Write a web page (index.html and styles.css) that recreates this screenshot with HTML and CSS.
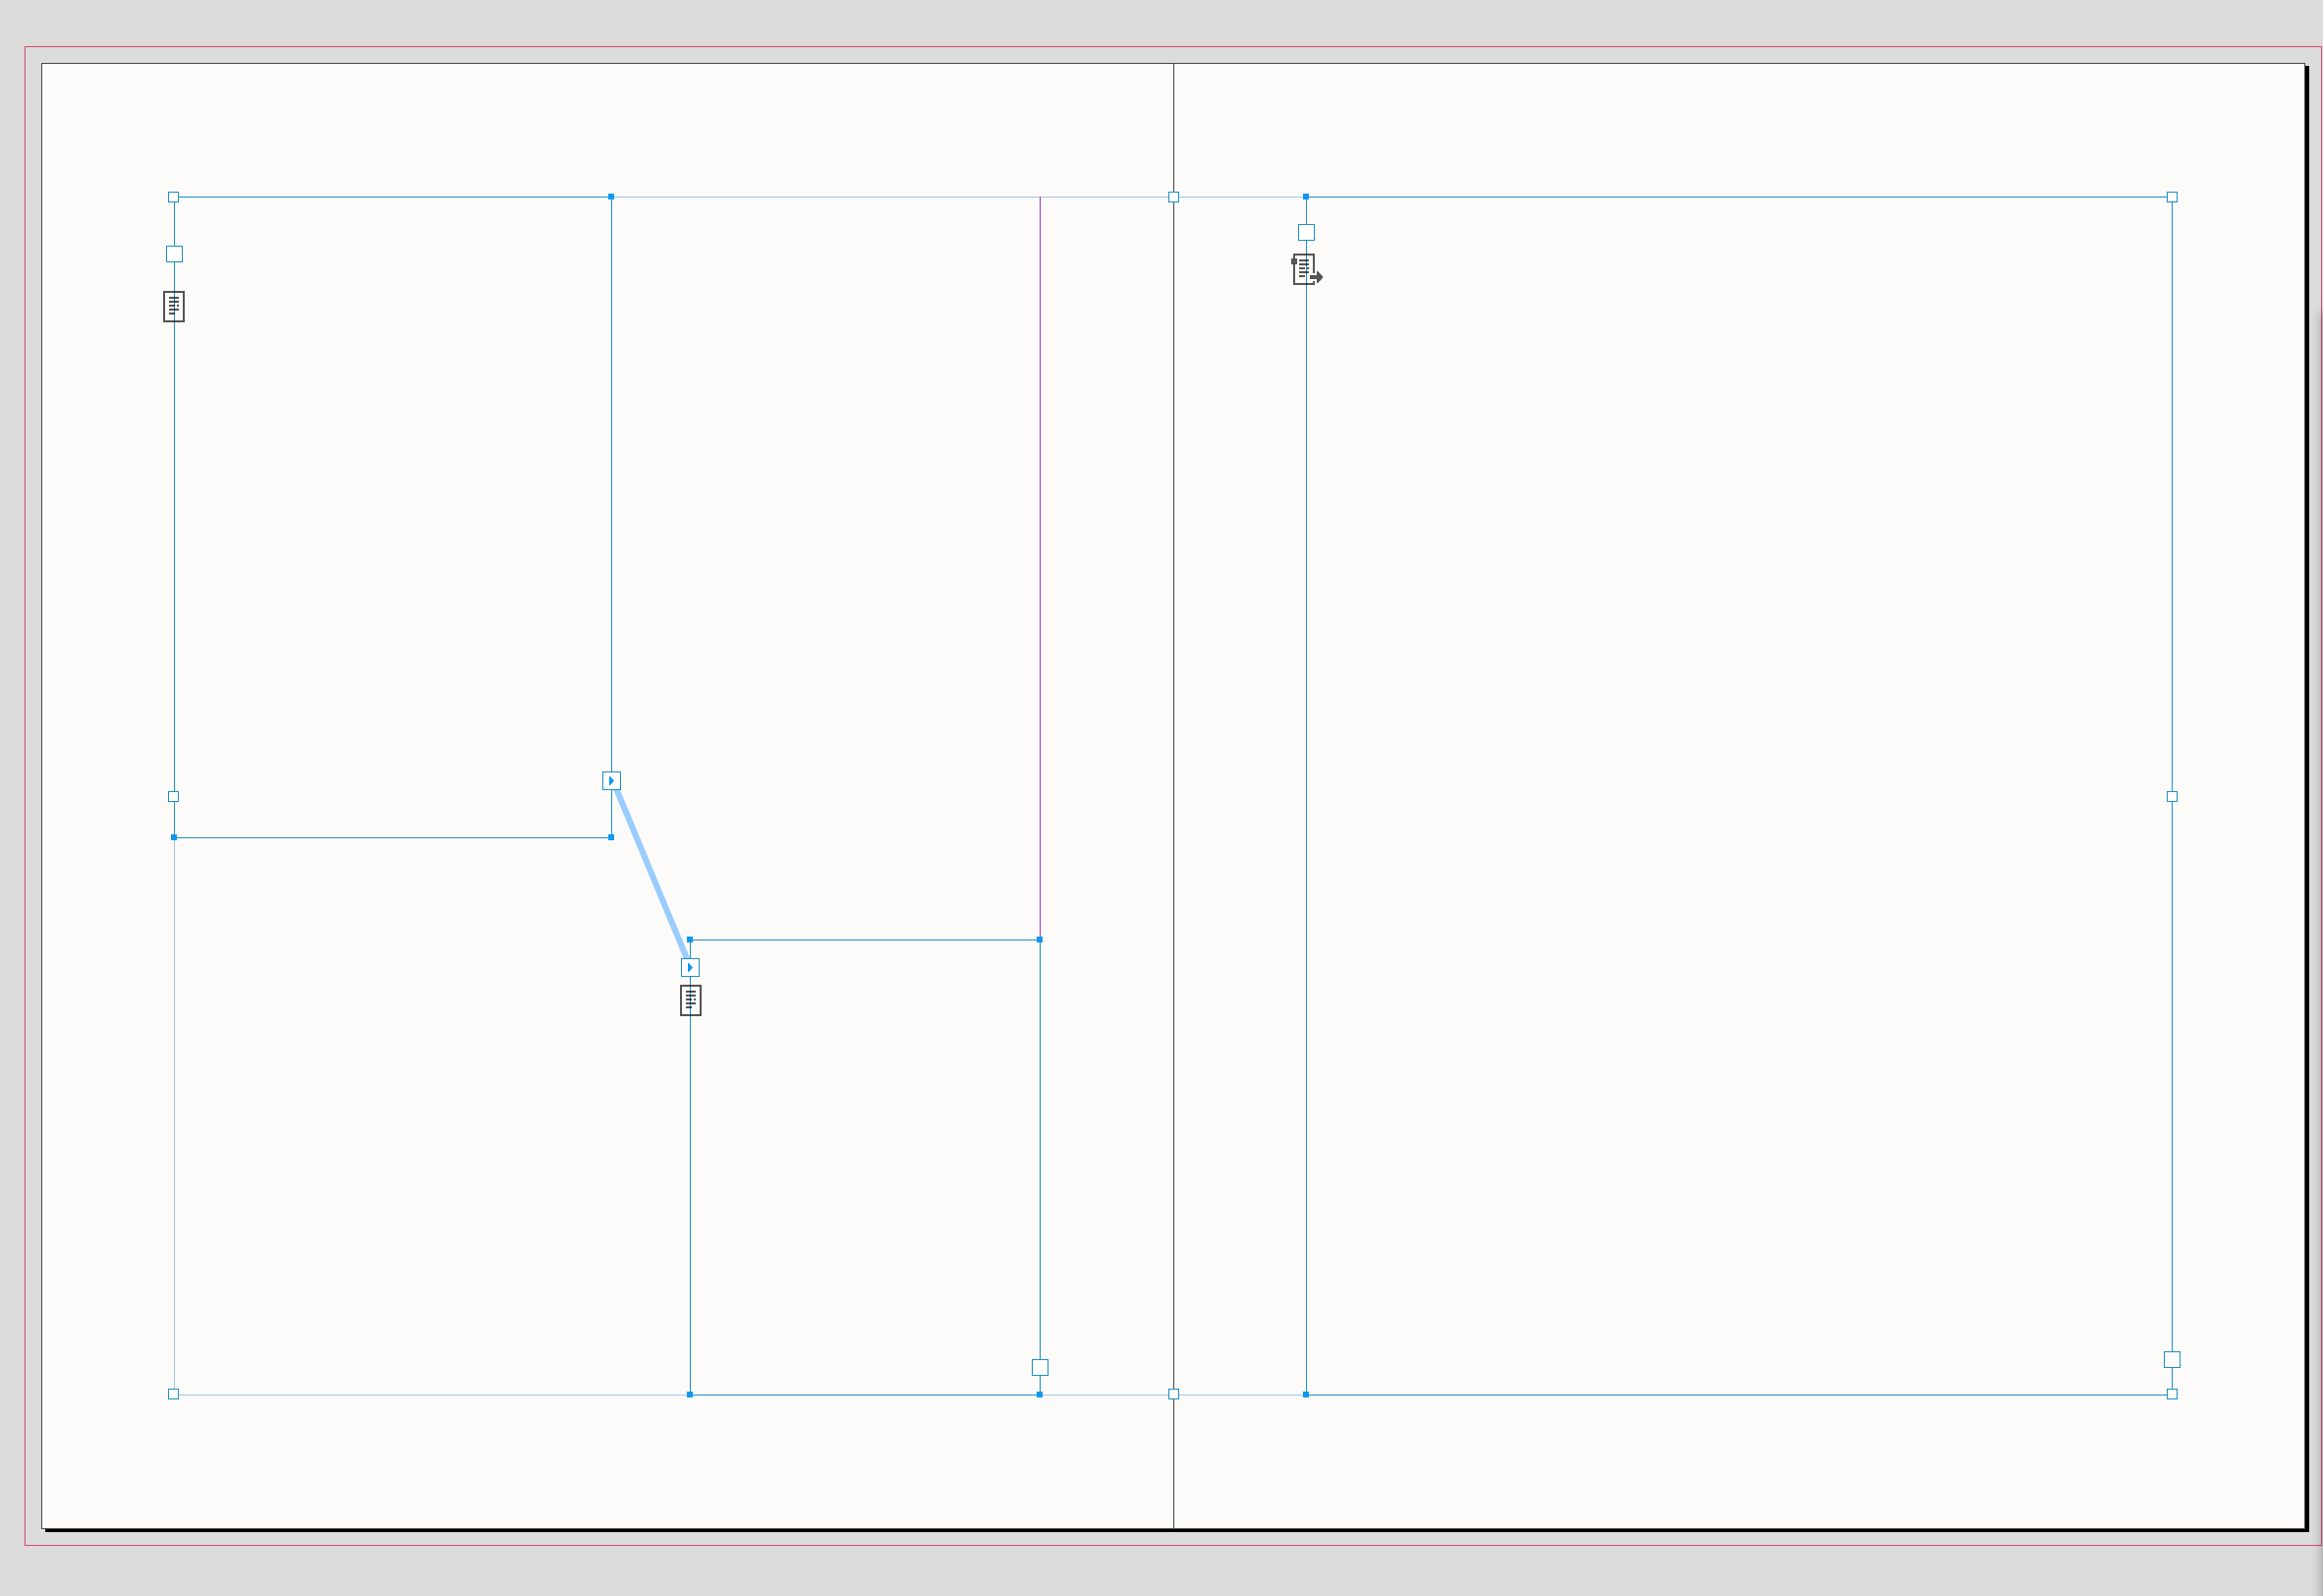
FILE: index.html
```html
<!DOCTYPE html>
<html lang="en">
<head>
<meta charset="utf-8">
<meta name="viewport" content="width=device-width, initial-scale=1">
<title>Layout spread</title>
<link rel="stylesheet" href="styles.css">
</head>
<body>
<svg class="defs" aria-hidden="true">
  <symbol id="story" viewBox="0 0 22 32">
    <path d="M0 0H22V32H0ZM2 2V30H20V2Z" fill-rule="evenodd"/>
    <path d="M6 6h10v2H6zM6 10h10v2H6zM6 14h6v2H6zM14 14h2v2h-2zM6 18h10v2H6zM6 22h6v2H6z"/>
  </symbol>
  <symbol id="story-flow" viewBox="-2 0 34 32">
    <path d="M0 0H22V20H20V2H2V30H20V28H22V32H0Z"/>
    <path d="M-2 5h6v6h-6zM6 6h10v2H6zM6 10h10v2H6zM6 14h6v2H6zM14 14h2v2h-2zM6 18h10v2H6zM6 22h6v2H6z"/>
    <path d="M17 22h7v-4h1l5 5v2l-5 5h-1v-4h-7z"/>
  </symbol>
</svg>
<main class="pasteboard">
  <div class="bleed">
    <div class="spread">
      <section class="page page-left">
        <div class="text-area column-edge">
          <svg class="thread" width="120" height="220" viewBox="0 0 120 220" aria-hidden="true">
            <path d="M22 14L101 204"/>
          </svg>
          <div class="frame frame-first">
            <i class="knob top right"></i>
            <i class="knob bottom left"></i>
            <i class="knob bottom right"></i>
            <button class="port in" aria-label="In port"></button>
            <svg class="story" width="22" height="32"><use href="#story"/></svg>
            <button class="port linked out" aria-label="Threaded out port"></button>
          </div>
          <div class="frame frame-second">
            <i class="knob top left"></i>
            <i class="knob top right"></i>
            <i class="knob bottom left"></i>
            <i class="knob bottom right"></i>
            <button class="port linked in" aria-label="Threaded in port"></button>
            <svg class="story" width="22" height="32"><use href="#story"/></svg>
            <button class="port out" aria-label="Out port"></button>
          </div>
        </div>
      </section>
      <section class="page page-right">
        <div class="text-area frame frame-primary">
          <i class="knob top left"></i>
          <i class="knob bottom left"></i>
          <button class="port in" aria-label="In port"></button>
          <svg class="story" width="34" height="32"><use href="#story-flow"/></svg>
          <button class="port out" aria-label="Out port"></button>
        </div>
      </section>
      <div class="selection outline"></div>
      <div class="selection handles">
        <i class="handle top left"></i>
        <i class="handle top center"></i>
        <i class="handle top right"></i>
        <i class="handle middle left"></i>
        <i class="handle middle right"></i>
        <i class="handle bottom left"></i>
        <i class="handle bottom center"></i>
        <i class="handle bottom right"></i>
      </div>
    </div>
  </div>
  <div class="panel-shade"></div>
</main>
</body>
</html>
```
FILE: styles.css
```css
:root {
  --board: #dcdcdc;
  --paper: #fcfbf9;
  --ink: #464646;
  --bleed: #cf5069;
  --bleed-halo: #e9d0d5;
  --frame: #1c8fc6;
  --knob: #0e98f0;
  --guide: #a4c6e8;
  --column: #a030cc;
  --thread: #99ccff;
}

* { box-sizing: border-box; }

body {
  margin: 0;
  background: var(--board);
  font-family: "Open Sans", sans-serif;
}

.defs { position: absolute; width: 0; height: 0; }

.pasteboard {
  position: relative;
  display: flex;
  min-height: 100vh;
  padding: 47px 1px 51px 25px;
  overflow: hidden;
}

.bleed {
  flex: 1;
  display: flex;
  padding: 16px;
  border: 1px solid var(--bleed);
  box-shadow: 0 0 0 1px var(--bleed-halo);
}

.spread {
  position: relative;
  isolation: isolate;
  flex: 1;
  display: flex;
  background: var(--paper);
  border: 1px solid var(--ink);
  box-shadow: 4px 3px 0 #000;
}

.page { display: flex; padding: 135px 134px; }
.page-left { flex: 1 1 2px; padding-right: 135px; border-right: 1px solid var(--ink); }
.page-right { flex: 1 1 0; }

.text-area { position: relative; flex: 1; }
.column-edge { border-right: 1px solid var(--column); }

/* Text frames on the canvas */
.frame { border: 1px solid var(--frame); }
.frame-first { position: absolute; left: 0; top: 0; width: 446px; height: 653px; }
.frame-second { position: absolute; right: -1px; bottom: 0; width: 357px; height: 464px; }

.knob { position: absolute; width: 6px; height: 6px; background: var(--knob); }
.knob.top { top: -4px; }
.knob.bottom { bottom: -3px; }
.knob.left { left: -4px; }
.knob.right { right: -3px; }

.port {
  position: absolute;
  width: 17px;
  height: 17px;
  padding: 0;
  border: 1px solid var(--frame);
  border-radius: 0;
  background: #fff;
}
.port.in { left: -9px; }
.port.out { right: -9px; }
.port.linked { width: 19px; height: 19px; }
.port.linked.in { left: -10px; }
.port.linked.out { right: -10px; }
.port.linked::before {
  content: "";
  position: absolute;
  left: 6px;
  top: 4px;
  width: 5px;
  height: 9px;
  background: var(--knob);
  clip-path: polygon(0 0, 20% 0, 100% 50%, 20% 100%, 0 100%);
}

.frame-first .in { top: 49px; }
.frame-first .out { bottom: 48px; }
.frame-second .in { top: 18px; }
.frame-second .out { bottom: 19px; }
.frame-primary .in { top: 27px; }
.frame-primary .out { bottom: 27px; }

.story { position: absolute; left: -12px; fill: #575556; mix-blend-mode: multiply; }
.frame-first .story { top: 95px; }
.frame-second .story { left: -11px; top: 45px; }
.frame-primary .story { left: -16px; top: 57px; }

.thread { position: absolute; right: 336px; bottom: 419px; overflow: visible; }
.thread path { stroke: var(--thread); stroke-width: 6; fill: none; }

/* Group selection across both pages */
.selection { position: absolute; inset: 135px 134px; border: 1px solid transparent; pointer-events: none; }
.outline { z-index: -1; border-color: var(--guide); }

.handle {
  position: absolute;
  width: 11px;
  height: 11px;
  background: #fff;
  border: 1px solid var(--frame);
}
.handle.top { top: -6px; }
.handle.middle { top: 50%; margin-top: -5px; }
.handle.bottom { bottom: -5px; }
.handle.left { left: -7px; }
.handle.center { left: 50%; margin-left: -5px; }
.handle.right { right: -6px; }

/* Shade cast by the docked panel beyond the right edge */
.panel-shade {
  position: absolute;
  top: 318px;
  right: -8px;
  bottom: -20px;
  width: 8px;
  box-shadow: 0 0 12px 0 rgba(0, 0, 0, 0.4);
}
```
